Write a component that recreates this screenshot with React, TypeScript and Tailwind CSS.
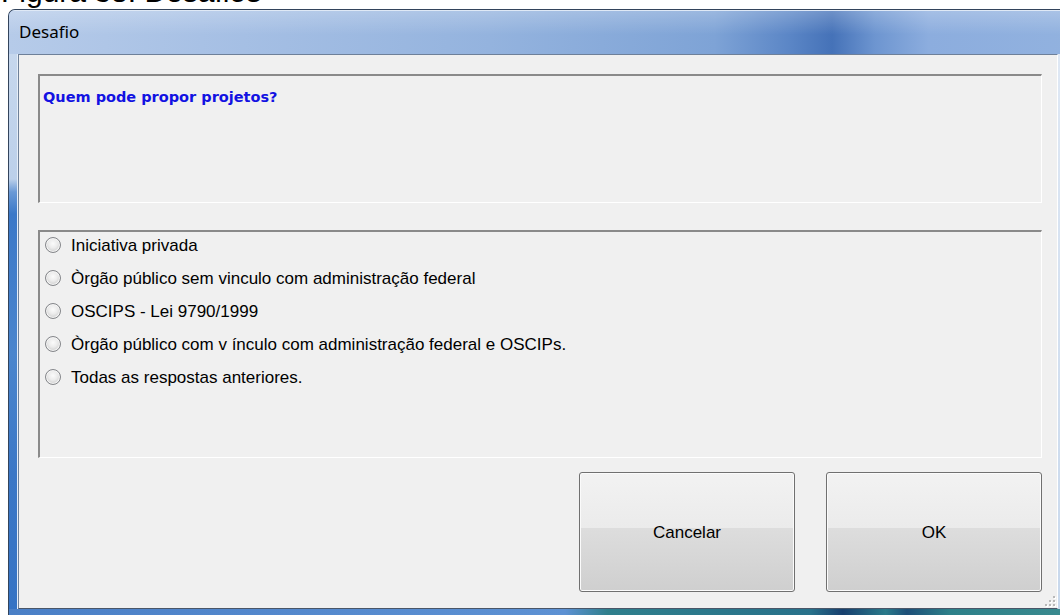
import React from "react";

const options = [
  "Iniciativa privada",
  "Òrgão público sem vinculo com administração federal",
  "OSCIPS - Lei 9790/1999",
  "Òrgão público com v ínculo com administração federal e OSCIPs.",
  "Todas as respostas anteriores.",
];

function Radio() {
  return (
    <span className="block w-[16px] h-[16px] shrink-0 rounded-full border border-[#84868a] bg-[radial-gradient(circle_at_50%_40%,#fbfbfb_0%,#ececec_40%,#d2d2d2_72%,#e6e6e6_100%)] shadow-[inset_0_0_0_1px_#f6f6f6]" />
  );
}

function WinButton({ label }: { label: string }) {
  return (
    <button className="w-[216px] h-[120px] rounded-[3px] border border-[#707070] bg-[linear-gradient(180deg,#f2f2f2_0%,#ebebeb_47%,#dddddd_47%,#cfcfcf_100%)] shadow-[inset_0_0_0_1px_#fbfbfb] text-[17px] text-black leading-none font-['Liberation_Sans',Arial,sans-serif]">
      {label}
    </button>
  );
}

function ResizeGrip() {
  const dots = [
    [8, 0],
    [8, 4],
    [4, 4],
    [8, 8],
    [4, 8],
    [0, 8],
  ];
  return (
    <svg width="11" height="11" viewBox="0 0 11 11" className="block">
      {dots.map(([x, y], i) => (
        <g key={i}>
          <rect x={x + 1} y={y + 1} width="2" height="2" fill="#ffffff" />
          <rect x={x} y={y} width="2" height="2" fill="#b8b8b8" />
        </g>
      ))}
    </svg>
  );
}

export default function App() {
  return (
    <div className="w-[1060px] h-[615px] overflow-hidden bg-white font-['Liberation_Sans',Arial,sans-serif]">
      {/* document caption above the dialog, clipped by the page top */}
      <div className="h-[9px] overflow-hidden">
        <div className="mt-[-25px] pl-[1px] text-[30px] leading-[34px] text-black whitespace-nowrap">
          Figura 38: Desafios
        </div>
      </div>

      {/* dialog window */}
      <div className="ml-[8px] w-[1070px] h-[606px] flex flex-col rounded-tl-[7px] border-t border-l border-[#33445c] overflow-hidden bg-[#8fb0dd]">
        {/* title bar */}
        <div className="h-[44px] shrink-0 flex items-center pl-[10px] pb-[3px] border-t border-[#dfe9f6] bg-[linear-gradient(180deg,rgba(255,255,255,0.22)_0%,rgba(255,255,255,0)_55%),linear-gradient(90deg,#b6cbe9_0%,#a8c1e5_18%,#94b3de_45%,#7ea3d6_66%,#5b86c6_73%,#4572b8_77%,#6d95d0_81%,#8cadde_86%,#92b2df_100%)]">
          <span className="text-[17px] text-black font-['Noto_Sans','Open_Sans',sans-serif] leading-none">
            Desafio
          </span>
        </div>

        {/* frame + client area */}
        <div className="h-[555px] shrink-0 flex">
          <div className="w-[9px] shrink-0 border-r border-[#e6eef8] bg-[linear-gradient(180deg,#c6d7ed_0px,#bcd0ea_125px,#6a99d6_138px,#3b78c8_160px,#4a85cd_300px,#3b77c6_420px,#3573c4_555px)]" />

          <div className="w-[1040px] shrink-0 border-t border-l border-b border-r border-t-[#6e8099] border-l-[#6e8099] border-b-[#4a5668] border-r-[#ffffff] bg-[#f0f0f0] flex flex-col pl-[19px] pt-[19px]">
            {/* question box */}
            <div className="w-[1004px] h-[129px] shrink-0 border-t-2 border-l-2 border-b border-r border-t-[#8a8a8a] border-l-[#8a8a8a] border-b-white border-r-white pl-[3px] pt-[12px]">
              <div className="text-[14.5px] leading-[18px] font-bold text-[#1212e2] font-['DejaVu_Sans',sans-serif]">
                Quem pode propor projetos?
              </div>
            </div>

            {/* answer options */}
            <div className="mt-[27px] w-[1004px] h-[228px] shrink-0 border-t-2 border-l-2 border-b border-r border-t-[#8a8a8a] border-l-[#8a8a8a] border-b-white border-r-white flex flex-col gap-[13px] pt-[3px] pl-[5px]">
              {options.map((o) => (
                <div key={o} className="h-[20px] flex items-center gap-[10px]">
                  <Radio />
                  <span className="text-[17px] leading-none text-black whitespace-nowrap">
                    {o}
                  </span>
                </div>
              ))}
            </div>

            {/* action buttons */}
            <div className="mt-[14px] w-[1004px] flex justify-end gap-[31px]">
              <WinButton label="Cancelar" />
              <WinButton label="OK" />
            </div>

            <div className="mt-auto self-end mr-[1px] mb-[1px]">
              <ResizeGrip />
            </div>
          </div>

          <div className="flex-1 bg-[linear-gradient(180deg,#dfe8f4,#c8d8ec)]" />
        </div>

        {/* bottom frame */}
        <div className="flex-1 bg-[linear-gradient(90deg,#4a7fc6_0%,#5d91d3_52%,#2f7f8c_56%,#28718a_75%,#173f6e_78%,#2a7a8a_82%,#1d4f78_84%,#2d8089_88%,#3b8b8f_100%)]" />
      </div>
    </div>
  );
}
